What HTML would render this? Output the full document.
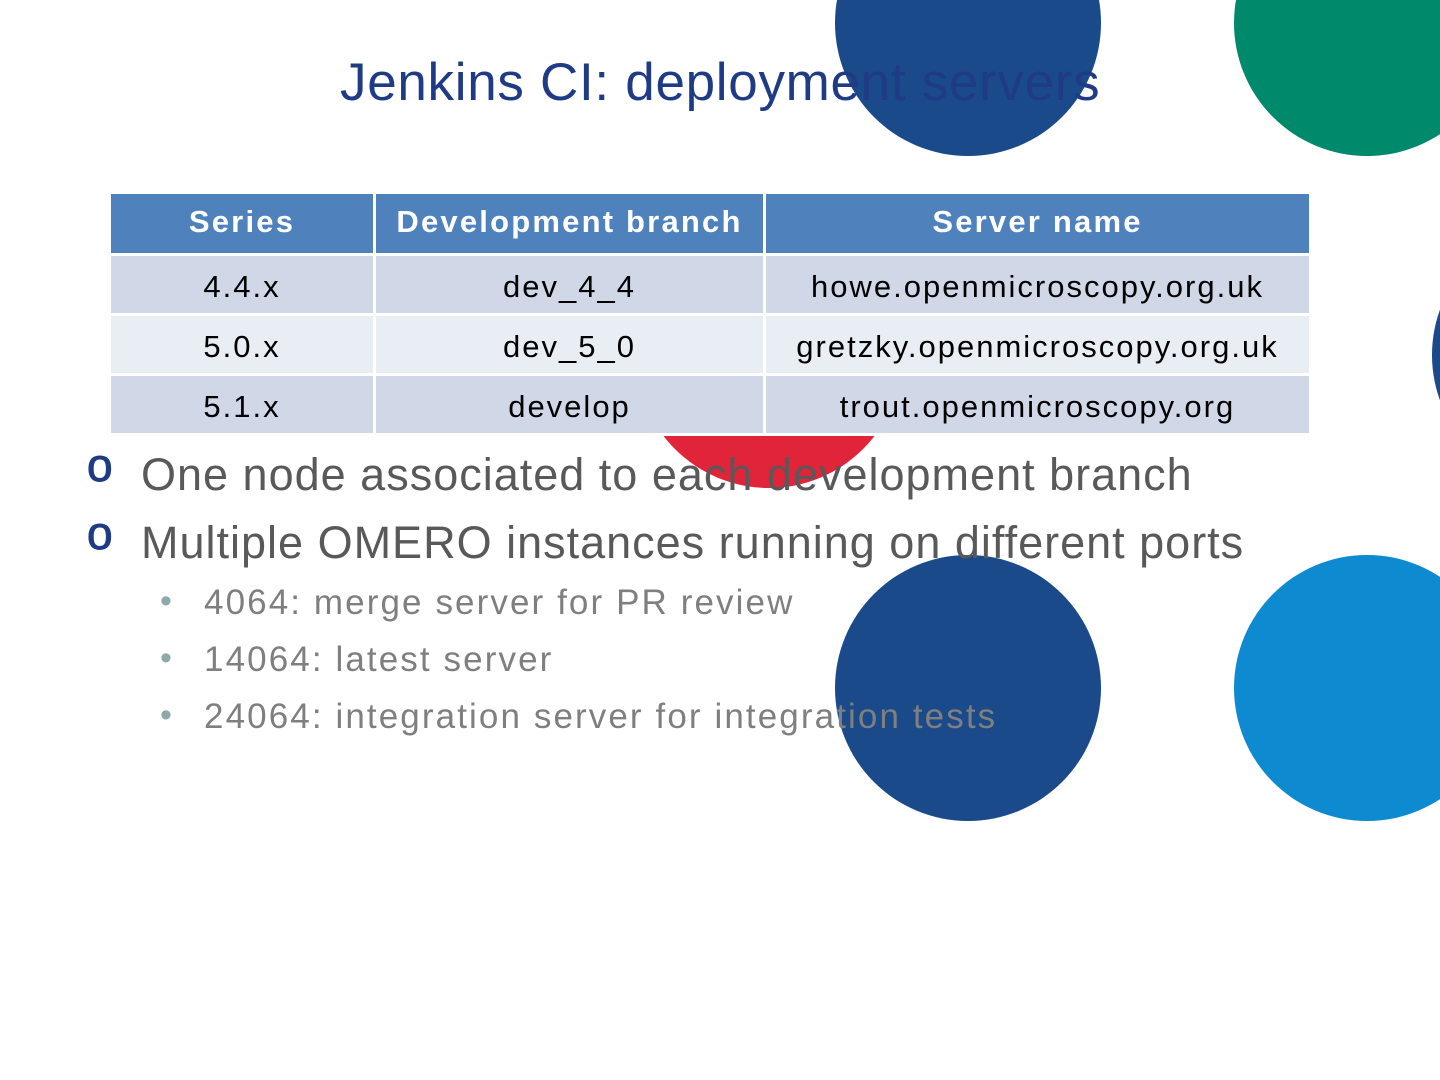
<!DOCTYPE html>
<html><head><style>
body{margin:0;width:1440px;height:1080px;overflow:hidden;background:#fff;position:relative;font-family:"Liberation Sans",sans-serif}
.c{position:absolute;border-radius:50%;width:266px;height:266px}
.t{position:absolute;white-space:nowrap}
table{position:absolute;left:108px;top:191px;border-collapse:collapse;width:1204px}
td,th{border:3px solid #fff;text-align:center;font-size:31px;padding:4px 0 0 0;height:53px;letter-spacing:2px}
th{background:#4f81bd;color:#fff;font-weight:bold;height:55px;padding:0 0 4px 0;letter-spacing:2.2px}
tr.a td{background:#d0d8e8}
tr.b td{background:#e9edf4}
.o{position:absolute;font-size:46px;color:#1f3b85;-webkit-text-stroke:1px #1f3b85}
.b1{font-size:45px;color:#595959;letter-spacing:1px}
.b2{font-size:35px;color:#7f7f7f;letter-spacing:2.1px}
.d{position:absolute;font-size:34px;color:#8da9a9}
</style></head><body>
<div class="c" style="left:835px;top:-110px;background:#1a4a8a"></div>
<div class="c" style="left:1234px;top:-110px;background:#00896a"></div>
<div class="c" style="left:636px;top:222px;background:#e2243a"></div>
<div class="c" style="left:1432px;top:222px;background:#1a4a8a"></div>
<div class="c" style="left:835px;top:555px;background:#1a4a8a"></div>
<div class="c" style="left:1234px;top:555px;background:#0e8bd0"></div>
<div class="t" style="left:340px;top:52px;font-size:53px;color:#1f3b85;letter-spacing:0.7px">Jenkins CI: deployment servers</div>
<table>
<tr><th style="width:262px">Series</th><th style="width:387px">Development branch</th><th>Server name</th></tr>
<tr class="a"><td>4.4.x</td><td>dev_4_4</td><td>howe.openmicroscopy.org.uk</td></tr>
<tr class="b"><td>5.0.x</td><td>dev_5_0</td><td>gretzky.openmicroscopy.org.uk</td></tr>
<tr class="a"><td>5.1.x</td><td>develop</td><td>trout.openmicroscopy.org</td></tr>
</table>
<div class="o" style="left:87px;top:438px">o</div>
<div class="t b1" style="left:141px;top:449px">One node associated to each development branch</div>
<div class="o" style="left:87px;top:506px">o</div>
<div class="t b1" style="left:141px;top:517px">Multiple OMERO instances running on different ports</div>
<div class="d" style="left:160px;top:582px">•</div>
<div class="t b2" style="left:204px;top:583px">4064: merge server for PR review</div>
<div class="d" style="left:160px;top:639px">•</div>
<div class="t b2" style="left:204px;top:640px">14064: latest server</div>
<div class="d" style="left:160px;top:696px">•</div>
<div class="t b2" style="left:204px;top:697px">24064: integration server for integration tests</div>
</body></html>
